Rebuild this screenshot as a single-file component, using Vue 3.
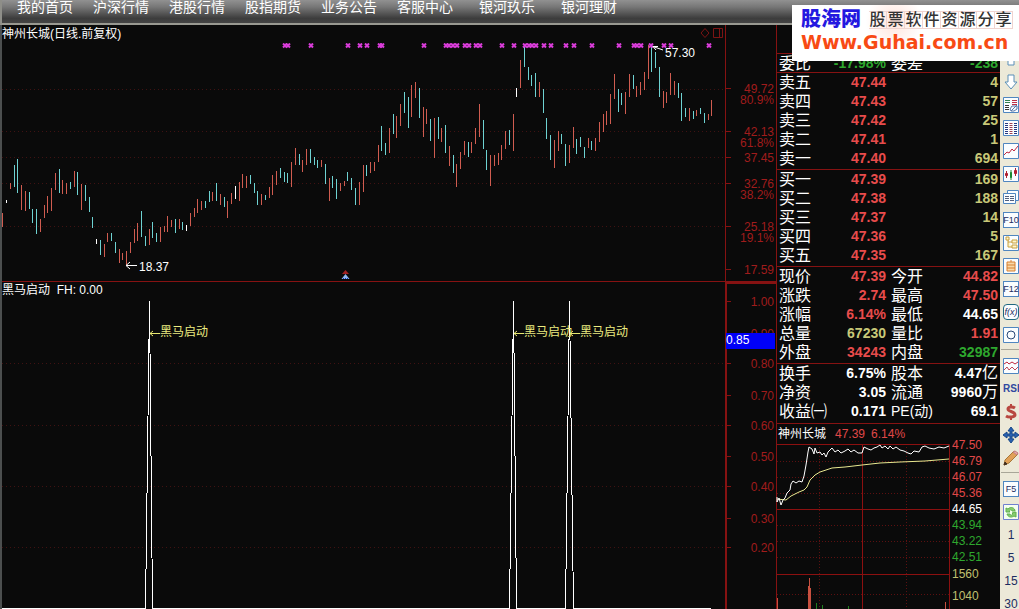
<script setup>
const menu = ['我的首页', '沪深行情', '港股行情', '股指期货', '业务公告', '客服中心']
const extraMenu = ['银河玖乐', '银河理财']

const colors = { r: '#d05c50', c: '#6ed2d2', w: '#ffffff' }

// kind, x, high, low
const candleData = `r2,213,227 w6,200,203 r10,183,189 c14,165,187 c17,159,193 r21,185,210 r25,191,211 c29,192,209 c32,209,223 c36,209,234
r40,219,232 r44,205,218 r47,196,213 r51,188,211 r55,173,190 c59,169,193 r62,180,194 r66,183,194 c70,182,189 r74,171,187
c77,172,195 r81,184,210 c85,185,201 c89,197,212 c92,217,228 w96,239,244 c100,240,255 r104,244,257 r107,233,242 c111,233,241
c115,242,253 r119,249,263 r122,253,260 r126,251,265 r130,242,253 r134,229,243 r137,223,241 c141,211,237 c145,236,246 r149,229,245
c152,222,238 c156,233,242 r160,227,242 r164,226,232 r167,216,232 r171,220,227 c175,219,233 r179,219,229 c182,222,230 w186,225,231
r190,213,226 r194,208,217 r197,199,213 r201,201,210 c205,201,208 c209,191,202 r212,192,201 c216,183,201 r220,194,205 c224,197,207
r227,201,218 r231,193,204 w235,186,199 r239,182,201 r242,174,188 r246,176,188 c250,175,184 c254,183,193 c257,191,205 r261,194,205
c265,195,200 r269,187,198 r272,175,195 r276,171,185 c280,168,178 c284,172,182 c287,173,183 r291,162,187 r295,148,165 c299,154,165
r302,160,172 r306,149,165 c310,149,163 c314,157,165 c317,160,168 r321,160,167 c325,164,184 r329,178,201 c332,176,188 c336,179,199
r340,183,191 r344,181,186 c347,172,181 c351,178,190 c355,188,205 r359,182,205 r363,165,192 c366,165,176 r370,162,173 r374,162,171
r378,145,162 c381,126,151 c385,143,155 r389,128,153 c393,114,134 r396,116,138 r400,104,126 c404,92,113 c408,97,128 r411,85,117
r415,82,98 c419,88,118 r423,107,137 r426,109,124 c430,119,141 r434,118,158 c438,117,139 r441,128,142 c445,125,153 r449,146,166
c453,155,173 r456,164,187 r460,152,169 r464,141,155 c468,142,157 r471,142,153 r475,128,144 r479,104,137 c483,120,149 c486,150,170
r490,155,186 r494,155,166 r498,153,165 r501,145,160 r505,131,149 c509,130,145 r513,114,151 w516,88,97 r520,60,88 c524,47,67
c528,67,80 c531,75,86 c535,73,97 r539,82,97 c543,89,113 c546,118,139 c550,135,160 r554,140,168 r558,131,151 c561,134,144
c565,144,166 r569,145,163 r573,127,148 c576,139,154 c580,137,147 c584,147,158 r588,138,148 c591,141,150 r595,138,151 r599,122,142
r603,114,132 r606,111,125 r610,94,124 r614,74,99 c618,89,112 c621,93,105 r625,92,114 r629,74,97 c633,75,89 r636,86,97
r640,82,95 r644,72,90 r648,45,79 c651,47,72 c655,52,68 c659,67,97 r663,91,108 r666,92,103 r670,73,95 r674,81,95
c678,83,98 c681,93,121 c685,108,117 r689,108,121 c693,111,119 r696,110,116 c700,108,114 c704,113,123 r708,114,120 r711,100,116`
const candles = candleData.split(/\s+/).map((s) => {
  const [x, top, low] = s.slice(1).split(',').map(Number)
  return { x, top, h: low - top, color: colors[s[0]] }
})

const marks = [285, 288, 311, 348, 360, 367, 380, 382, 424, 446, 449, 453, 457, 465, 469, 476, 480, 502, 514, 525, 529, 532, 536, 544, 551, 566, 574, 592, 619, 634, 637, 641, 651, 664, 671, 709]

const priceGrid = [89, 131, 157, 183, 226]
const priceAxis = [
  { y: 89, t: '49.72', tick: true }, { y: 100, t: '80.9%' },
  { y: 132, t: '42.13', tick: true }, { y: 143, t: '61.8%' },
  { y: 158, t: '37.45', tick: true },
  { y: 184, t: '32.76', tick: true }, { y: 195, t: '38.2%' },
  { y: 227, t: '25.18', tick: true }, { y: 238, t: '19.1%' },
  { y: 270, t: '17.59', tick: true }
]
const signalGrid = [363, 425, 486, 547]
const signalAxis = [
  { y: 301, t: '1.00' }, { y: 333, t: '0.90' }, { y: 363, t: '0.80' }, { y: 395, t: '0.70' }, { y: 425, t: '0.60' },
  { y: 456, t: '0.50' }, { y: 486, t: '0.40' }, { y: 518, t: '0.30' }, { y: 547, t: '0.20' }
]
const signals = [149, 513, 569]

const sell = [['五', '47.44', '4'], ['四', '47.43', '57'], ['三', '47.42', '25'], ['二', '47.41', '1'], ['一', '47.40', '694']]
const buy = [['一', '47.39', '169'], ['二', '47.38', '188'], ['三', '47.37', '14'], ['四', '47.36', '5'], ['五', '47.35', '167']]
const groups = [
  { name: 'ratio', rows: [['委比', '-17.98%', 'green', '委差', '-238', 'green']] },
  { name: 'sell', rows: sell.map(([n, p, v]) => ['卖' + n, p, 'red', '', v, 'gold']) },
  { name: 'buy', rows: buy.map(([n, p, v]) => ['买' + n, p, 'red', '', v, 'gold']) },
  {
    name: 'quote-rows',
    rows: [
      ['现价', '47.39', 'red', '今开', '44.82', 'red'],
      ['涨跌', '2.74', 'red', '最高', '47.50', 'red'],
      ['涨幅', '6.14%', 'red', '最低', '44.65', 'white'],
      ['总量', '67230', 'gold', '量比', '1.91', 'red'],
      ['外盘', '34243', 'red', '内盘', '32987', 'green']
    ]
  },
  {
    name: 'basics',
    rows: [
      ['换手', '6.75%', 'white', '股本', '4.47', 'white', '亿'],
      ['净资', '3.05', 'white', '流通', '9960', 'white', '万'],
      ['收益㈠', '0.171', 'white', 'PE(动)', '69.1', 'white']
    ]
  }
]

const miniLabels = [
  { y: 445, t: '47.50', c: '#e04848' }, { y: 461, t: '46.79', c: '#e04848' }, { y: 477, t: '46.07', c: '#e04848' },
  { y: 493, t: '45.36', c: '#e04848' }, { y: 509, t: '44.65', c: '#ffffff' }, { y: 525, t: '43.94', c: '#2ea82e' },
  { y: 541, t: '43.22', c: '#2ea82e' }, { y: 557, t: '42.51', c: '#2ea82e' },
  { y: 574, t: '1560', c: '#c0c070' }, { y: 596, t: '1040', c: '#c0c070' }
]
const miniDots = [461, 477, 493, 525, 541, 557, 594]

const frame = { d: 'M.5 .5H15.5V15.5H.5Z', s: '#4f86c0', f: '#fafdff' }
const tools = [
  { n: '上移', p: [{ d: 'M8 1L14 8H11V14H5V8H2Z', s: '#5a8fb8', f: '#fff' }] },
  { n: '下移', p: [{ d: 'M5 1H11V8H14L8 15L2 8H5Z', s: '#5a8fb8', f: '#fff' }] },
  { n: '报告', p: [frame, { d: 'M2 3.5H7M2 5.5H7', s: '#308050' }, { d: 'M9 3.5H14M9 5.5H14M9 7.5H14', s: '#c03048' }, { d: 'M2 8.5H6M2 10.5H6M2 12.5H6', s: '#333' }, { d: 'M7 12L9 9H14V12L11 14H8ZM8 14L14 8', s: '#5878a8' }] },
  { n: '列表', p: [frame, { d: 'M2 3.5H5M2 5.5H5M2 7.5H5M2 9.5H5M2 11.5H5M2 13.5H5', s: '#243880' }, { d: 'M6.5 3.5H9.5M6.5 5.5H9.5M6.5 7.5H9.5M6.5 9.5H9.5M6.5 11.5H9.5M6.5 13.5H9.5', s: '#a04050' }, { d: 'M11 3.5H14M11 5.5H14M11 7.5H14M11 9.5H14M11 11.5H14M11 13.5H14', s: '#243880' }] },
  { n: '分时图', p: [frame, { d: 'M1 12L4 9L6 10L9 6L11 8L15 3', s: '#c02840' }] },
  { n: 'K线图', p: [frame, { d: 'M3.5 5V12M12.5 2V10', s: '#b02030' }, { d: 'M2.5 7.5H4.5V9.5H2.5ZM11.5 4.5H13.5V7.5H11.5Z', s: '#b02030', f: '#b02030' }, { d: 'M8 4V14M7.5 6.5H8.5V11.5H7.5Z', s: '#188830', f: '#188830' }] },
  { n: '多窗口', p: [{ d: 'M4.5 1.5H15.5V11.5H4.5Z', s: '#4f86c0', f: '#fafdff' }, { d: 'M.5 4.5H12.5V14.5H.5Z', s: '#4f86c0', f: '#fafdff' }, { d: 'M2 7.5H6M7 7.5H11M2 9.5H6M7 9.5H11M2 11.5H6M7 11.5H11', s: '#506080' }] },
  { n: '基本资料', t: 'F10', box: true },
  { n: '板块树', p: [frame, { d: 'M3 2H6V5H3ZM5 5V12H9M5 7H9M9 5H14V8H9ZM9 10H14V13H9Z', s: '#c8a040', f: '#fff6cc' }] },
  { n: '自选股', p: [frame, { d: 'M4 4H12V13H4ZM4 7H12M4 10H12M8 2V4', s: '#d88030', f: '#f8d8a8' }] },
  { n: '公告', t: 'F12', box: true },
  { n: '公式', t: 'f(x)', box: true, fx: true },
  { n: '圆形', p: [frame, { d: 'M8 4A4 4 0 1 1 8 12A4 4 0 1 1 8 4Z', s: '#284878' }] },
  { sep: true },
  { n: '叠加', p: [frame, { d: 'M1 6L4 4L6 6L9 4L12 6L15 4', s: '#c02840' }, { d: 'M1 12L4 9L6 12L9 9L12 12L15 9', s: '#c04858' }] },
  { n: '指标', t: 'RSI', rsi: true },
  { n: '交易', p: [{ d: 'M12 4C9 2 5 3 5 5C5 8 12 7 12 11C12 13 6 14 3 12', s: '#b84840', w: 3 }, { d: 'M8 0V3M8 13V16', s: '#b84840', w: 2 }] },
  { n: '移动', p: [{ d: 'M8 0L11 4H9V7H12V5L16 8L12 11V9H9V12H11L8 16L5 12H7V9H4V11L0 8L4 5V7H7V4H5Z', s: '#184888', f: '#2860b0' }] },
  { n: '画线', p: [{ d: 'M1 15L2 10L11 1L15 4L6 13Z', s: '#a87838', f: '#e0a058' }, { d: 'M10 2L14 5L15 3L12 1Z', s: '#c08080', f: '#e8a8a8' }, { d: 'M1 15L2 12L4 14Z', s: '#443020', f: '#443020' }] },
  { sep: true },
  { n: '切换', t: 'F5', box: true },
  { n: '刷新', p: [{ d: 'M.5 .5H15.5V15.5H.5Z', s: '#7080d0', f: '#f4fff0' }, { d: 'M3 8V4L5 5C8 2 12 4 12 7H9C8 5 7 6 6 7L7 8ZM13 8V13L11 12C8 14 5 13 4 10H7C8 12 9 11 10 10L9 9Z', s: '#60b050', f: '#88cc70' }] },
  { n: '1分钟', t: '1' }, { n: '5分钟', t: '5' }, { n: '15分钟', t: '15' }, { n: '30分钟', t: '30' }
]
</script>

<template>
  <div class="app">
    <header class="top">
      <nav class="menu">
        <a v-for="m in menu" :key="m" href="#">{{ m }}</a>
        <a v-for="m in extraMenu" :key="m" class="extra" href="#">{{ m }}</a>
      </nav>
    </header>

    <div class="body">
      <main class="charts">
        <section class="pane price">
          <div class="plot">
            <div class="bar">
              <h1>神州长城(日线.前复权)</h1>
              <svg class="corner" width="26" height="14" viewBox="0 0 26 14" fill="none" stroke="#7c1414">
                <path d="M6 2.5L10 7L6 11.5L2 7Z" />
                <path d="M14.5 2.5H23.5V11.5H14.5ZM20.5 2.5V11.5" />
              </svg>
            </div>
            <svg class="draw" viewBox="0 43 723 238" preserveAspectRatio="xMinYMin">
              <g transform="translate(-2 0)">
                <path v-for="y in priceGrid" :key="y" class="dots" :d="`M2 ${y}.5H725`" />
                <rect v-for="c in candles" :key="c.x" :x="c.x" :y="c.top" width="1" :height="c.h" :fill="c.color" shape-rendering="crispEdges" />
                <path v-for="x in marks" :key="x" class="mark" :d="`M${x - 2} 43.5l4 4M${x + 2} 43.5l-4 4`" />
                <path class="pointer" d="M653 46.5L663 50M653 46.5H658M653 46.5L656 50" />
                <text class="white" x="665" y="57">57.30</text>
                <path class="pointer" d="M126 265.5H137M130 262L126 265.5L130 269" />
                <text class="white" x="139" y="271">18.37</text>
                <path d="M345.500 270L349 274H342Z" fill="#a02020" />
                <path d="M345.500 274L349.500 279H341.500Z" fill="#8fb8f0" />
                <path d="M343 278.500H348" stroke="#1030b0" stroke-dasharray="1 1" />
              </g>
            </svg>
          </div>
          <svg class="axis" width="51" height="256" viewBox="725 25 51 256">
            <path d="M725.500 25V281" stroke="#861212" />
            <g v-for="a in priceAxis" :key="a.t">
              <path v-if="a.tick" :d="`M726 ${a.y - 0.5}H731`" stroke="#861212" />
              <text class="scale" x="774" :y="a.y + 4" text-anchor="end">{{ a.t }}</text>
            </g>
          </svg>
        </section>

        <section class="pane signal">
          <div class="plot">
            <h2>黑马启动&nbsp; FH: 0.00</h2>
            <svg class="draw" viewBox="0 299 723 310" preserveAspectRatio="xMinYMin">
              <g transform="translate(-2 0)">
                <path v-for="y in signalGrid" :key="y" class="dots" :d="`M2 ${y}.5H725`" />
                <path class="spike" d="M2 608.5H145.500L149.500 301L152.500 608.5H509.500L513.500 301L516.500 608.5H565.500L569.500 301L573.500 608.5H711" />
                <g v-for="x in signals" :key="x">
                  <path class="lead" :d="`M${x + 1} 333.5h10M${x + 4} 331l-3 2.5l3 2.5`" />
                  <text class="tag" :x="x + 11" y="336">黑马启动</text>
                </g>
              </g>
            </svg>
          </div>
          <svg class="axis" width="51" height="327" viewBox="725 282 51 327">
            <path d="M726 609V283H776" stroke="#861212" stroke-width="2" fill="none" />
            <g v-for="a in signalAxis" :key="a.t">
              <path :d="`M727 ${a.y + 0.5}H731`" stroke="#861212" />
              <text class="scale" x="774" :y="a.y + 5" text-anchor="end">{{ a.t }}</text>
            </g>
            <rect x="726" y="333" width="49" height="16" fill="#0000f8" />
            <text class="white" x="726" y="344">0.85</text>
          </svg>
        </section>
      </main>

      <aside class="quote">
        <div v-for="g in groups" :key="g.name" class="group" :class="g.name">
          <table>
            <colgroup><col class="lab"><col class="val"><col class="lab"><col></colgroup>
            <tbody>
              <tr v-for="r in g.rows" :key="r[0]">
                <th scope="row">{{ r[0] }}</th>
                <td :class="r[2]">{{ r[1] }}</td>
                <th :class="{ pe: r[3].startsWith('PE'), second: true }">{{ r[3] }}</th>
                <td :class="r[5]">{{ r[4] }}<span v-if="r[6]" class="unit">{{ r[6] }}</span></td>
              </tr>
            </tbody>
          </table>
        </div>
        <div class="mini">
          <div class="mini-title"><span>神州长城</span><span class="last">47.39</span><span class="pct">6.14%</span></div>
          <svg class="mini-chart" viewBox="777 444 223 165" preserveAspectRatio="xMinYMin">
            <path v-for="y in miniDots" :key="y" class="dots strong" :d="`M777 ${y}.5H949`" />
            <path class="dots strong" d="M819.500 444V609M906.500 444V609" />
            <path d="M777 444.500H949.500V609M777 509.500H949M777 574.500H949M862.500 444V609" stroke="#8c1010" fill="none" />
            <path d="M808.500 586V609M809.500 578V609M810.500 588V609M945.500 602V609M777.500 598V609" stroke="#c85040" />
            <path d="M816.500 603V609M822.500 605V609M848.500 606V609" stroke="#208020" />
            <polyline fill="none" stroke="#e8e890" points="777,499 786,500 791,496 795,494 799,492 804,490 807,487 810,480 815,475 820,472 826,470 832,468 845,467 862,465 880,463 900,462 925,461 949,459" />
            <polyline fill="none" stroke="#ffffff" points="777,497 777,502 779,498 781,505 783,500 785,498 787,493 790,490 791,484 793,481 796,483 799,481 802,482 804,476 806,465 808,452 809,447 812,449 814,454 815,448 817,453 820,452 822,455 824,453 826,457 828,452 832,448 835,452 838,450 841,453 845,451 848,449 851,452 854,450 858,453 862,453 864,447 868,449 871,450 874,448 877,447 880,445 882,448 885,446 888,449 890,446 893,449 896,447 900,450 904,451 908,453 911,454 914,451 919,452 922,447 925,446 929,448 934,449 939,447 944,448 949,446" />
            <text v-for="l in miniLabels" :key="l.t" x="952" :y="l.y + 4" :fill="l.c">{{ l.t }}</text>
          </svg>
        </div>
      </aside>

      <div class="tools" role="toolbar" aria-label="工具">
        <template v-for="(b, i) in tools" :key="i">
          <hr v-if="b.sep">
          <button v-else type="button" :title="b.n" :aria-label="b.n">
            <span v-if="b.t" class="txt" :class="{ box: b.box, fx: b.fx, rsi: b.rsi }">{{ b.t }}</span>
            <svg v-else width="16" height="16" viewBox="0 0 16 16">
              <path v-for="(s, k) in b.p" :key="k" :d="s.d" :stroke="s.s" :stroke-width="s.w || 1" :fill="s.f || 'none'" />
            </svg>
          </button>
        </template>
      </div>
    </div>

    <a class="banner" href="#">
      <span class="line">
        <b class="brand">股海网</b>
        <span class="slogan"><i v-for="c in '股票软件资源分享'" :key="c">{{ c }}</i></span>
      </span>
      <b class="site">Www.Guhai.com.cn</b>
    </a>
  </div>
</template>

<style>
html, body { background: #0a0a0a; }
</style>

<style scoped>
.app {
  position: relative;
  box-sizing: border-box;
  height: 100vh;
  overflow: hidden;
  display: flex;
  flex-direction: column;
  background: #0a0a0a;
  color: #fff;
  font: 12px/16px "Liberation Sans", "Noto Sans CJK SC", sans-serif;
}
a { color: inherit; text-decoration: none; }
.top {
  flex: none;
  height: 23px;
  border-bottom: 2px solid #999991;
  border-left: 2px solid #8e8e88;
  background: linear-gradient(#919191 0, #777 30%, #3c3c3c 80%, #444 100%);
}
.menu { display: flex; gap: 20px; padding-left: 15px; font-size: 14px; line-height: 15px; white-space: nowrap; }
.menu .extra { margin-left: 6px; }
.menu .extra + .extra { margin-left: 6px; }
.body { flex: 1; min-height: 0; display: flex; }
.charts { flex: 1; min-width: 0; border-left: 2px solid #4c4f4f; }
.pane { display: flex; }
.price { border-bottom: 1px solid #861212; }
.plot { flex: 1; min-width: 0; }
.bar { display: flex; justify-content: space-between; height: 18px; }
.bar h1, .signal h2 { margin: 0; font-size: 12px; font-weight: 400; line-height: 18px; white-space: nowrap; }
.signal h2 { line-height: 16px; height: 17px; }
.corner { margin-top: 1px; }
.draw, .axis, .mini-chart { display: block; }
.draw { width: 100%; height: auto; }
.axis { flex: none; }
svg text { font: 12px "Liberation Sans", "Noto Sans CJK SC", sans-serif; }
.dots { stroke: #401212; stroke-dasharray: 1 3; fill: none; }
.dots.strong { stroke: #5c1010; stroke-dasharray: 1 2; }
.mark { stroke: #d93cd9; stroke-width: 2; fill: none; }
.pointer { stroke: #fff; fill: none; }
.white { fill: #fff; }
.scale { fill: #a01c1c; }
.spike { stroke: #fff; fill: none; shape-rendering: crispEdges; }
.lead { stroke: #e8e870; fill: none; }
.tag { fill: #ecec80; }

.quote { flex: none; box-sizing: border-box; width: 224px; padding-top: 28px; border-left: 1px solid #861212; }
.group { padding: 0 2px 1px; border-top: 1px solid #861212; }
.group.ratio { padding-bottom: 0; margin-bottom: -1px; }
.group.basics { padding-bottom: 2px; }
table { width: 100%; table-layout: fixed; border-collapse: collapse; }
.lab { width: 48px; }
.val { width: 59px; }
th, td { height: 19px; padding: 0; line-height: 19px; white-space: nowrap; }
th { font-size: 16px; font-weight: 400; text-align: left; }
th.second { padding-left: 5px; }
th.pe { font-size: 14px; }
td { font-size: 14px; font-weight: 700; text-align: right; }
.unit { font-size: 16px; font-weight: 400; line-height: 1; }
.red { color: #e84c4c; }
.green { color: #2ea82e; }
.gold { color: #c8c878; }
.white { color: #fff; }
.mini { border-top: 1px solid #861212; }
.mini-title { display: flex; height: 20px; padding-left: 1px; line-height: 20px; }
.mini-title .last { margin-left: 9px; color: #e04848; }
.mini-title .pct { margin-left: 6px; color: #e04848; }
.mini-chart { width: 100%; height: auto; overflow: visible; }

.tools { flex: none; box-sizing: border-box; width: 19px; padding-top: 22px; background: #ece9d8; }
.tools button {
  display: flex;
  align-items: center;
  width: 100%;
  height: 23px;
  padding: 0 0 0 3px;
  border: 0;
  background: none;
  color: #1c2c60;
  font: 12px "Liberation Sans", sans-serif;
}
.tools svg { flex: none; }
.txt { width: 16px; text-align: center; flex: none; }
.box { box-sizing: border-box; height: 16px; border: 1px solid #4f86c0; background: #fafdff; font-size: 9px; line-height: 14px; display: flex; justify-content: center; }
.fx { border-radius: 4px; border-color: #206880; font-style: italic; }
.rsi { font-size: 10px; font-weight: 700; color: #3048a0; display: flex; }
hr { height: 1px; margin: 3px 0 4px 1px; border: 0; background: #a8a698; }

.banner {
  position: absolute;
  top: 5px;
  right: 0;
  box-sizing: border-box;
  width: 227px;
  height: 56px;
  padding: 3px 6px 0 9px;
  display: flex;
  flex-direction: column;
  white-space: nowrap;
  background: radial-gradient(circle at 45% 30%, #ffe4dc 0, #fff 22%), #fff;
}
.line { display: flex; align-items: center; height: 23px; }
.brand { color: #2418e0; font-size: 20px; line-height: 23px; font-weight: 900; }
.slogan { display: flex; flex: 1; margin-left: 8px; }
.slogan i {
  flex: 1;
  box-sizing: border-box;
  height: 18px;
  border: 1px solid #f0d4d0;
  border-left-width: 0;
  color: #333;
  font-size: 16px;
  font-weight: 500;
  line-height: 16px;
  text-align: center;
  font-style: normal;
}
.site { color: #f84a14; font: 700 19px/22px "DejaVu Sans", sans-serif; }
</style>
